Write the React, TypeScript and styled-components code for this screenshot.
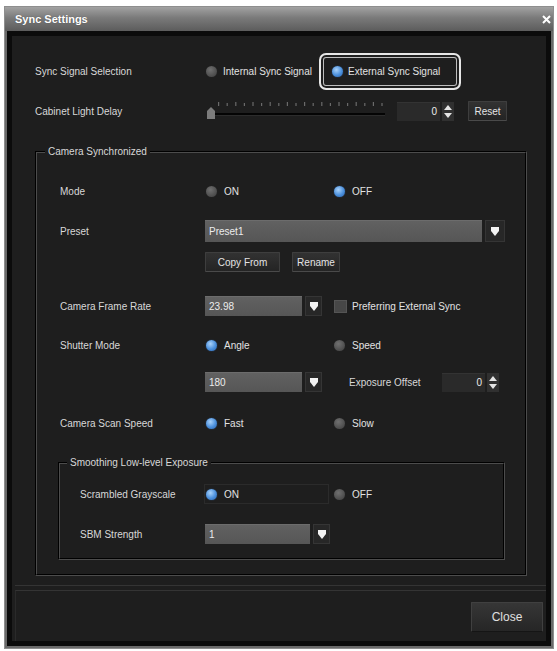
import React from "react";
import styled, { createGlobalStyle } from "styled-components";

const GlobalStyle = createGlobalStyle`
  html, body {
    margin: 0;
    padding: 0;
    background: #ffffff;
  }
  body {
    font-family: "Liberation Sans", Arial, sans-serif;
    font-size: 10px;
    color: #dcdcdc;
  }
`;

export default function App() {
  return (
    <>
      <GlobalStyle />
      <Window>
        <TitleBar>
          <span>Sync Settings</span>
          <CloseIcon viewBox="0 0 9 9">
            <path d="M1 1L8 8M8 1L1 8" />
          </CloseIcon>
        </TitleBar>
        <Frame>
          <Main>
            <Row $label={170} $h={37}>
              <Label>Sync Signal Selection</Label>
              <Controls>
                <SyncOption>
                  <Radio />
                  Internal Sync Signal
                </SyncOption>
                <HighlightOption>
                  <Radio $on />
                  External Sync Signal
                </HighlightOption>
              </Controls>
            </Row>
            <Row $label={170} $mt={10}>
              <Label>Cabinet Light Delay</Label>
              <Controls>
                <Slider />
                <NumberField $ml={12} value="0" />
                <Button $ml={14} $w={39}>
                  Reset
                </Button>
              </Controls>
            </Row>

            <Group>
              <Legend>Camera Synchronized</Legend>
              <Row $label={145}>
                <Label>Mode</Label>
                <RadioPair first="ON" second="OFF" selected={1} />
              </Row>
              <Row $label={145} $mt={18}>
                <Label>Preset</Label>
                <Controls>
                  <Select value="Preset1" w={277} arrow={20} h={22} />
                </Controls>
              </Row>
              <Row $label={145} $mt={9}>
                <span />
                <Controls>
                  <Button $w={75}>Copy From</Button>
                  <Button $ml={12} $w={48}>
                    Rename
                  </Button>
                </Controls>
              </Row>
              <Row $label={145} $mt={22}>
                <Label>Camera Frame Rate</Label>
                <Controls>
                  <Select value="23.98" w={97} />
                  <CheckOption>
                    <CheckBox />
                    Preferring External Sync
                  </CheckOption>
                </Controls>
              </Row>
              <Row $label={145} $mt={17}>
                <Label>Shutter Mode</Label>
                <RadioPair first="Angle" second="Speed" selected={0} />
              </Row>
              <Row $label={145} $mt={15}>
                <span />
                <Controls>
                  <Select value="180" w={97} />
                  <InlineLabel>Exposure Offset</InlineLabel>
                  <NumberField value="0" />
                </Controls>
              </Row>
              <Row $label={145} $mt={19}>
                <Label>Camera Scan Speed</Label>
                <RadioPair first="Fast" second="Slow" selected={0} />
              </Row>

              <InnerGroup>
                <InnerLegend>Smoothing Low-level Exposure</InnerLegend>
                <Row $label={125}>
                  <Label>Scrambled Grayscale</Label>
                  <RadioPair first="ON" second="OFF" selected={0} framed />
                </Row>
                <Row $label={125} $mt={18}>
                  <Label>SBM Strength</Label>
                  <Controls>
                    <Select value="1" w={105} />
                  </Controls>
                </Row>
              </InnerGroup>
            </Group>
          </Main>
          <Footer>
            <CloseButton>Close</CloseButton>
          </Footer>
        </Frame>
      </Window>
    </>
  );
}

function RadioPair({
  first,
  second,
  selected,
  framed = false,
}: {
  first: string;
  second: string;
  selected: number;
  framed?: boolean;
}) {
  return (
    <Pair>
      <Option $framed={framed}>
        <Radio $on={selected === 0} />
        {first}
      </Option>
      <Option>
        <Radio $on={selected === 1} />
        {second}
      </Option>
    </Pair>
  );
}

function Select({
  value,
  w,
  arrow = 17,
  h = 20,
}: {
  value: string;
  w: number;
  arrow?: number;
  h?: number;
}) {
  return (
    <SelectWrap $h={h}>
      <SelectField $w={w}>{value}</SelectField>
      <ArrowBox $w={arrow}>
        <svg width="8" height="9" viewBox="0 0 8 9">
          <path d="M0 0H8V4L4 9L0 4Z" fill="#f2f2f2" />
        </svg>
      </ArrowBox>
    </SelectWrap>
  );
}

function NumberField({ value, $ml = 0 }: { value: string; $ml?: number }) {
  return (
    <NumberWrap $ml={$ml}>
      <NumberBox>{value}</NumberBox>
      <Spinner viewBox="0 0 12 19" width="12" height="19">
        <rect x="0" y="0" width="12" height="19" fill="#303030" />
        <path d="M2 8L6 3L10 8Z" fill="#e4e4e4" />
        <path d="M2 11L6 16L10 11Z" fill="#e4e4e4" />
      </Spinner>
    </NumberWrap>
  );
}

function Slider() {
  const ticks = Array.from({ length: 20 }, (_, i) => 13 + i * 8.6);
  return (
    <SliderBox viewBox="0 0 180 22" width="180" height="22">
      {ticks.map((x, i) => (
        <rect
          key={x}
          x={x}
          y={i % 2 ? 3 : 2}
          width="1.2"
          height={i % 2 ? 3 : 4}
          fill="#6a6a6a"
        />
      ))}
      <rect x="8" y="13" width="172" height="2" fill="#040404" />
      <rect x="8" y="15" width="172" height="1" fill="#2c2c2c" />
      <path d="M2 11L6 7L10 11V19H2Z" fill="#7c7c7c" />
    </SliderBox>
  );
}

const Window = styled.div`
  margin: 6px 0 0 4px;
  width: 550px;
  height: 643px;
  box-sizing: border-box;
  border: 1px solid #8e8e8e;
  background: #6a6a6a;
  padding: 0 2px 2px;
  display: flex;
  flex-direction: column;
`;

const TitleBar = styled.div`
  height: 24px;
  margin: 0 -2px;
  padding: 0 2px 0 10px;
  display: flex;
  align-items: center;
  justify-content: space-between;
  background: linear-gradient(#a2a2a2, #7a7a7a 45%, #5c5c5c);
  color: #ffffff;
  font-size: 11px;
  font-weight: bold;
  text-shadow: 0 0 1px rgba(0, 0, 0, 0.4);
`;

const CloseIcon = styled.svg`
  width: 9px;
  height: 9px;
  stroke: #ffffff;
  stroke-width: 2;
`;

const Frame = styled.div`
  flex: 1;
  display: flex;
  flex-direction: column;
  border: 5px solid #0b0b0b;
  background: #1e1e1e;
`;

const Main = styled.div`
  flex: 1;
  margin-left: 3px;
  padding: 17px 0 0 20px;
  border-bottom: 1px solid #343434;
`;

const Row = styled.div<{ $label: number; $mt?: number; $h?: number }>`
  display: grid;
  grid-template-columns: ${(p) => p.$label}px 1fr;
  align-items: center;
  height: ${(p) => p.$h ?? 22}px;
  margin-top: ${(p) => p.$mt ?? 0}px;
`;

const Label = styled.span`
  color: #d8d8d8;
  white-space: nowrap;
`;

const Controls = styled.div`
  display: flex;
  align-items: center;
`;

const Pair = styled.div`
  display: grid;
  grid-template-columns: 128px auto;
  align-items: center;
`;

const Option = styled.label<{ $framed?: boolean }>`
  display: flex;
  align-items: center;
  gap: 7px;
  height: 20px;
  padding-left: 1px;
  box-sizing: border-box;
  color: #e2e2e2;
  white-space: nowrap;
  border: 1px solid ${(p) => (p.$framed ? "#2b2b2b" : "transparent")};
  margin-left: -1px;
  width: ${(p) => (p.$framed ? "125px" : "auto")};
`;

const SyncOption = styled(Option)`
  width: 115px;
  gap: 6px;
`;

const HighlightOption = styled.label`
  display: flex;
  align-items: center;
  gap: 5px;
  width: 142px;
  height: 37px;
  box-sizing: border-box;
  padding-left: 11px;
  border: 2px solid #e6e6e6;
  border-radius: 7px;
  box-shadow: inset 0 0 0 2px #1e1e1e, inset 0 0 0 3px #bdbdbd;
  color: #e2e2e2;
  white-space: nowrap;
`;

const Radio = styled.span<{ $on?: boolean }>`
  flex: none;
  width: 11px;
  height: 11px;
  border-radius: 50%;
  background: ${(p) =>
    p.$on
      ? "radial-gradient(circle at 40% 35%, #a9d2fa, #4a8fdc 55%, #2d63ad)"
      : "radial-gradient(circle at 40% 35%, #707070, #4c4c4c 70%, #3c3c3c)"};
  box-shadow: 0 0 1px ${(p) => (p.$on ? "#3a78c4" : "#333")};
`;

const CheckOption = styled.label`
  display: flex;
  align-items: center;
  gap: 5px;
  margin-left: 12px;
  color: #e2e2e2;
  white-space: nowrap;
`;

const CheckBox = styled.span`
  width: 13px;
  height: 13px;
  box-sizing: border-box;
  background: #474747;
  border: 1px solid #555555;
`;

const SelectWrap = styled.div<{ $h: number }>`
  display: flex;
  gap: 3px;
  height: ${(p) => p.$h}px;
`;

const SelectField = styled.div<{ $w: number }>`
  width: ${(p) => p.$w}px;
  box-sizing: border-box;
  padding-left: 4px;
  display: flex;
  align-items: center;
  background: linear-gradient(#616161, #565656);
  border-top: 1px solid #6c6c6c;
  color: #ececec;
`;

const ArrowBox = styled.div<{ $w: number }>`
  width: ${(p) => p.$w}px;
  display: flex;
  align-items: center;
  justify-content: center;
  background: #272727;
  border: 1px solid #353535;
  box-sizing: border-box;
`;

const NumberWrap = styled.div<{ $ml: number }>`
  display: flex;
  align-items: center;
  gap: 2px;
  margin-left: ${(p) => p.$ml}px;
`;

const NumberBox = styled.div`
  width: 43px;
  height: 19px;
  box-sizing: border-box;
  padding-right: 3px;
  display: flex;
  align-items: center;
  justify-content: flex-end;
  background: #2a2a2a;
  border-top: 1px solid #333333;
  color: #ececec;
`;

const Spinner = styled.svg`
  display: block;
`;

const SliderBox = styled.svg`
  display: block;
`;

const Button = styled.button<{ $ml?: number; $w: number }>`
  width: ${(p) => p.$w}px;
  height: 20px;
  margin-left: ${(p) => p.$ml ?? 0}px;
  padding: 0;
  font-family: "Liberation Sans", Arial, sans-serif;
  font-size: 10px;
  color: #e4e4e4;
  background: linear-gradient(#323232, #242424);
  border: 1px solid #3e3e3e;
  border-bottom-color: #4a4a4a;
  border-radius: 1px;
`;

const InlineLabel = styled.span`
  width: 93px;
  margin-left: 27px;
  color: #d8d8d8;
  white-space: nowrap;
`;

const Group = styled.fieldset`
  width: 492px;
  box-sizing: border-box;
  margin: 24px 0 0;
  padding: 22px 0 0 23px;
  min-width: 0;
  border: 2px groove #4c4c4c;
`;

const Legend = styled.legend`
  margin-left: -15px;
  padding: 0 3px;
  line-height: 12px;
  color: #d8d8d8;
`;

const InnerGroup = styled(Group)`
  width: 447px;
  margin: 23px 0 14px -2px;
  padding: 14px 0 13px 20px;
`;

const InnerLegend = styled(Legend)`
  margin-left: -13px;
`;

const Footer = styled.div`
  height: 51px;
  box-sizing: border-box;
  margin: 4px 0 0 3px;
  padding-right: 3px;
  border-top: 1px solid #343434;
  border-left: 1px solid #2a2a2a;
  display: flex;
  align-items: center;
  justify-content: flex-end;
`;

const CloseButton = styled.button`
  width: 72px;
  height: 30px;
  margin-top: 2px;
  font-family: "Liberation Sans", Arial, sans-serif;
  font-size: 12px;
  color: #e0e0e0;
  background: linear-gradient(#363636, #262626);
  border: 1px solid #404040;
  border-bottom-color: #151515;
  border-radius: 1px;
`;
